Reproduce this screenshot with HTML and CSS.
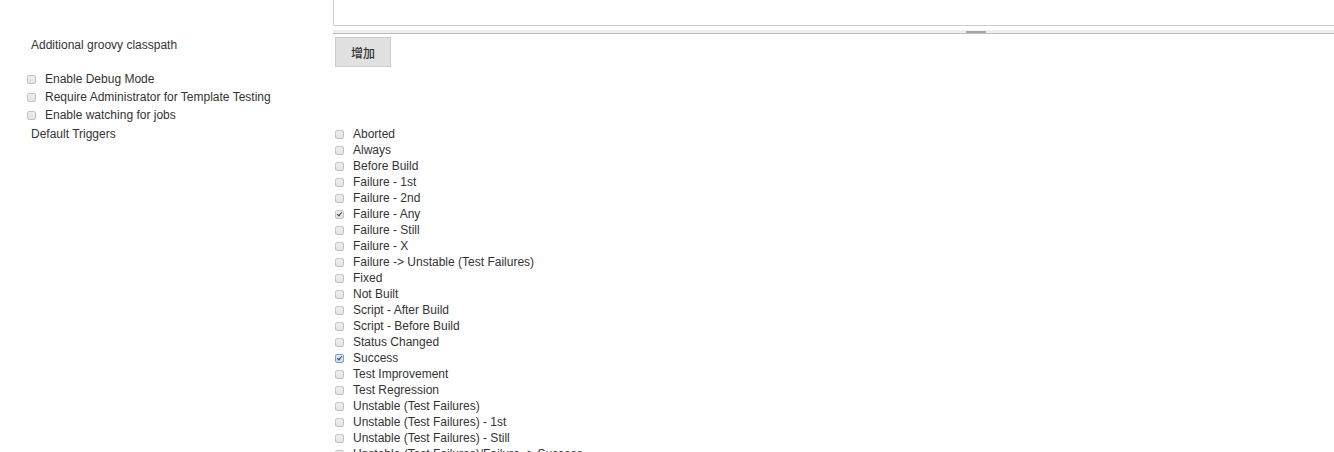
FILE: index.html
```html
<!DOCTYPE html>
<html lang="en">
<head>
    <meta charset="UTF-8">
    <meta name="viewport" content="width=device-width, initial-scale=1.0">
    <title>Global Configuration</title>
    <link rel="stylesheet" href="styles.css">
</head>
<body>
    <div class="config">
        <div class="field-row">
            <div class="label"></div>
            <div class="field">
                <div class="textarea"></div>
                <div class="resize-bar"><span class="resize-grip"></span></div>
            </div>
        </div>

        <div class="field-row classpath-row">
            <div class="label">Additional groovy classpath</div>
            <div class="field">
                <button type="button" class="btn">增加</button>
            </div>
        </div>

        <div class="options">
            <label class="option"><input type="checkbox"> Enable Debug Mode</label>
            <label class="option"><input type="checkbox"> Require Administrator for Template Testing</label>
            <label class="option"><input type="checkbox"> Enable watching for jobs</label>
        </div>

        <div class="field-row triggers-row">
            <div class="label">Default Triggers</div>
            <div class="field">
                <ul class="triggers">
                    <li><label><input type="checkbox"> Aborted</label></li>
                    <li><label><input type="checkbox"> Always</label></li>
                    <li><label><input type="checkbox"> Before Build</label></li>
                    <li><label><input type="checkbox"> Failure - 1st</label></li>
                    <li><label><input type="checkbox"> Failure - 2nd</label></li>
                    <li><label><input type="checkbox" checked> Failure - Any</label></li>
                    <li><label><input type="checkbox"> Failure - Still</label></li>
                    <li><label><input type="checkbox"> Failure - X</label></li>
                    <li><label><input type="checkbox"> Failure -&gt; Unstable (Test Failures)</label></li>
                    <li><label><input type="checkbox"> Fixed</label></li>
                    <li><label><input type="checkbox"> Not Built</label></li>
                    <li><label><input type="checkbox"> Script - After Build</label></li>
                    <li><label><input type="checkbox"> Script - Before Build</label></li>
                    <li><label><input type="checkbox"> Status Changed</label></li>
                    <li><label><input type="checkbox" class="focused" checked> Success</label></li>
                    <li><label><input type="checkbox"> Test Improvement</label></li>
                    <li><label><input type="checkbox"> Test Regression</label></li>
                    <li><label><input type="checkbox"> Unstable (Test Failures)</label></li>
                    <li><label><input type="checkbox"> Unstable (Test Failures) - 1st</label></li>
                    <li><label><input type="checkbox"> Unstable (Test Failures) - Still</label></li>
                    <li><label><input type="checkbox"> Unstable (Test Failures)/Failure -&gt; Success</label></li>
                </ul>
            </div>
        </div>
    </div>
</body>
</html>
```

FILE: styles.css
```css
* {
    margin: 0;
    padding: 0;
    box-sizing: border-box;
}

body {
    font-family: 'Liberation Sans', Arial, sans-serif;
    font-size: 12px;
    color: #333;
    background: #fff;
    overflow: hidden;
}

.config {
    width: 100%;
}

.field-row {
    display: grid;
    grid-template-columns: 333px 1fr;
}

.label {
    padding-left: 31px;
    line-height: 14px;
}

.field {
    min-width: 0;
}

.textarea {
    height: 26px;
    border: 1px solid #ccc;
    border-top: none;
    border-right: none;
    border-bottom-left-radius: 2px;
}

.resize-bar {
    display: flex;
    align-items: center;
    margin-top: 4px;
    height: 4px;
    background: #efefef;
    border-bottom: 1px solid #bbb;
}

.resize-grip {
    width: 20px;
    height: 2px;
    margin-left: 633px;
    background: #a8a8a8;
}

.classpath-row {
    margin-top: 3px;
}

.classpath-row .label {
    padding-top: 1px;
}

.btn {
    margin-left: 2px;
    width: 56px;
    height: 30px;
    background: #e1e1e1;
    border: 1px solid #ccc;
    color: #333;
    font-family: 'Liberation Sans', 'Noto Sans CJK SC', sans-serif;
    font-size: 12px;
    font-weight: 500;
    cursor: pointer;
}

.options {
    margin-top: 3px;
    padding-left: 27px;
}

.option {
    display: flex;
    align-items: center;
    height: 18px;
}

input[type="checkbox"] {
    appearance: none;
    -webkit-appearance: none;
    position: relative;
    width: 9px;
    height: 9px;
    margin-right: 9px;
    border: 1px solid #c4c4c4;
    border-radius: 2px;
    background: linear-gradient(#efefef, #e2e2e2);
    flex: none;
}

input[type="checkbox"]:checked::after {
    content: '';
    position: absolute;
    left: 2px;
    top: 0;
    width: 2px;
    height: 4px;
    border-right: 1.5px solid #444;
    border-bottom: 1.5px solid #444;
    transform: rotate(40deg);
}

input[type="checkbox"].focused {
    border-color: #7b9fd4;
    background: linear-gradient(#dce8f7, #c9daf1);
}

.triggers-row {
    margin-top: 2px;
}

.triggers-row .label {
    line-height: 16px;
}

.triggers {
    list-style: none;
    padding-left: 2px;
}

.triggers label {
    display: flex;
    align-items: center;
    height: 16px;
    white-space: nowrap;
}
```
